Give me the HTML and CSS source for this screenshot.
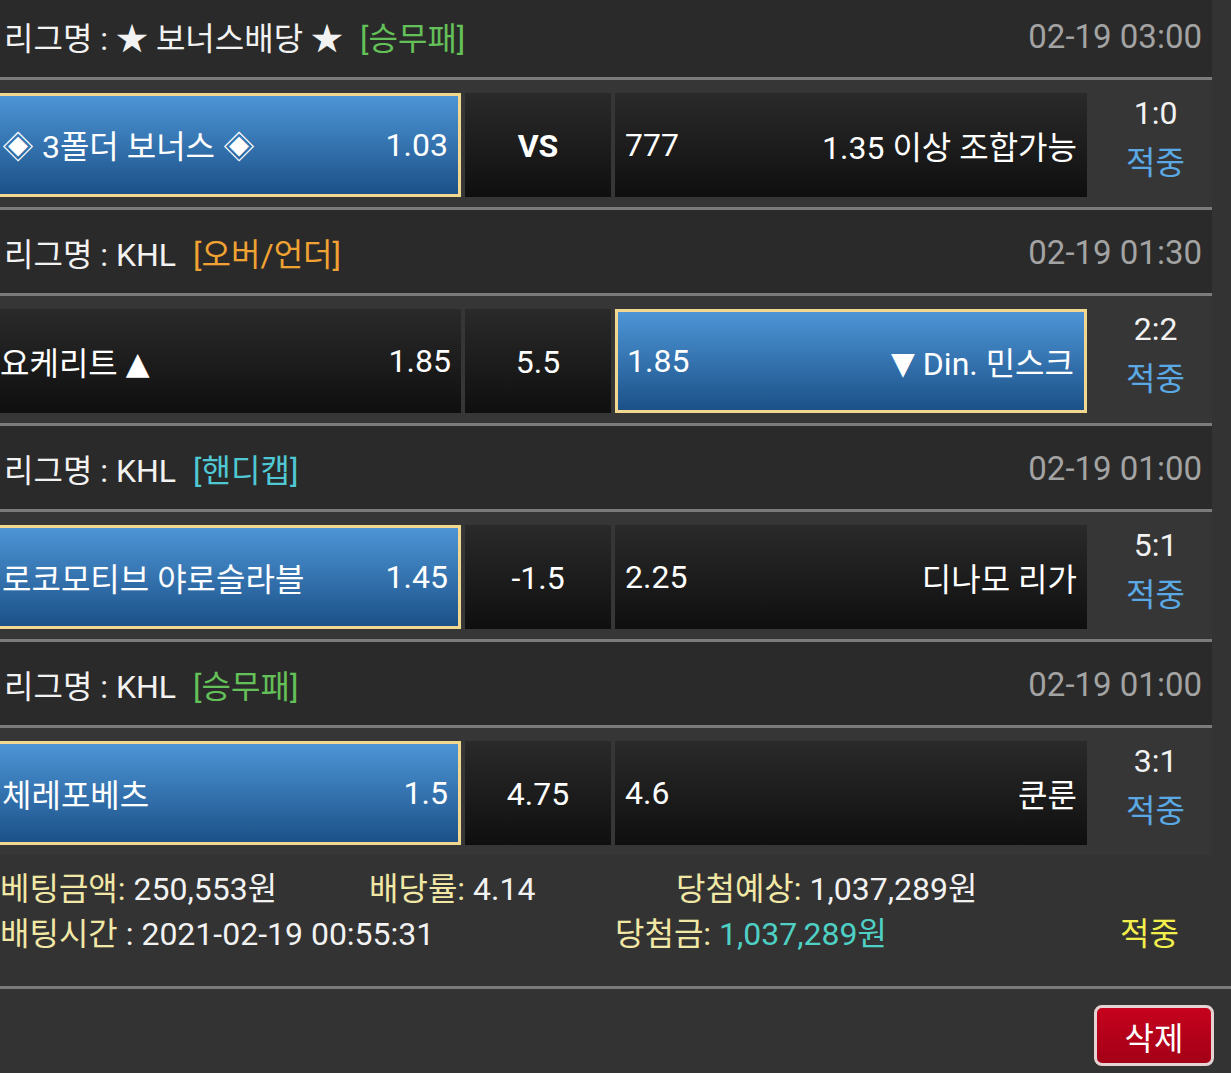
FILE: index.html
```html
<!DOCTYPE html>
<html lang="ko">
<head>
  <meta charset="UTF-8">
  <meta name="viewport" content="width=device-width, initial-scale=1.0">
  <title>베팅내역</title>
  <link rel="stylesheet" href="styles.css">
</head>
<body>
  <div class="slip">
    <div class="games">

      <div class="game">
        <div class="league">
          <span class="league-name">리그명 : ★ 보너스배당 ★</span>
          <span class="tag tag-green">[승무패]</span>
          <span class="time">02-19 03:00</span>
        </div>
        <div class="match">
          <div class="pick picked"><span>◈ 3폴더 보너스 ◈</span><span>1.03</span></div>
          <div class="pick mid vs">VS</div>
          <div class="pick"><span>777</span><span>1.35 이상 조합가능</span></div>
          <div class="result"><span class="score">1:0</span><span class="hit">적중</span></div>
        </div>
      </div>

      <div class="game">
        <div class="league">
          <span class="league-name">리그명 : KHL</span>
          <span class="tag tag-orange">[오버/언더]</span>
          <span class="time">02-19 01:30</span>
        </div>
        <div class="match">
          <div class="pick"><span>요케리트 <i class="arrow">▲</i></span><span>1.85</span></div>
          <div class="pick mid">5.5</div>
          <div class="pick picked"><span>1.85</span><span><i class="arrow">▼</i> Din. 민스크</span></div>
          <div class="result"><span class="score">2:2</span><span class="hit">적중</span></div>
        </div>
      </div>

      <div class="game">
        <div class="league">
          <span class="league-name">리그명 : KHL</span>
          <span class="tag tag-cyan">[핸디캡]</span>
          <span class="time">02-19 01:00</span>
        </div>
        <div class="match">
          <div class="pick picked"><span>로코모티브 야로슬라블</span><span>1.45</span></div>
          <div class="pick mid">-1.5</div>
          <div class="pick"><span>2.25</span><span>디나모 리가</span></div>
          <div class="result"><span class="score">5:1</span><span class="hit">적중</span></div>
        </div>
      </div>

      <div class="game">
        <div class="league">
          <span class="league-name">리그명 : KHL</span>
          <span class="tag tag-green">[승무패]</span>
          <span class="time">02-19 01:00</span>
        </div>
        <div class="match">
          <div class="pick picked"><span>체레포베츠</span><span>1.5</span></div>
          <div class="pick mid">4.75</div>
          <div class="pick"><span>4.6</span><span>쿤룬</span></div>
          <div class="result"><span class="score">3:1</span><span class="hit">적중</span></div>
        </div>
      </div>

    </div>

    <div class="summary">
      <div class="sum-row">
        <span class="sum-a"><em>베팅금액:</em> 250,553원</span>
        <span class="sum-b"><em>배당률:</em> 4.14</span>
        <span><em>당첨예상:</em> 1,037,289원</span>
      </div>
      <div class="sum-row">
        <span class="sum-c"><em>배팅시간</em> : 2021-02-19 00:55:31</span>
        <span class="sum-d"><em>당첨금:</em> <b class="won">1,037,289원</b></span>
        <span class="status">적중</span>
      </div>
    </div>

    <div class="actions">
      <button class="btn-delete">삭제</button>
    </div>
  </div>
</body>
</html>
```

FILE: styles.css
```css
:root {
  --bg: #333333;
  --league-bg: #2a2a2a;
  --match-bg: #363636;
  --line: #7b7b7b;
  --text: #f2f2f2;
  --muted: #a3a3a3;
  --label: #f1e8a6;
  --hit-blue: #5aa8e4;
}

* {
  margin: 0;
  padding: 0;
  box-sizing: border-box;
}

body {
  font-family: Roboto, "Noto Sans CJK KR", sans-serif;
  font-size: 32px;
  background: var(--bg);
  color: var(--text);
  overflow: hidden;
}

.slip {
  margin: -6px 0 0 -10px;
}

.games {
  width: 1222px;
}

/* league header */
.league {
  display: flex;
  align-items: center;
  height: 86px;
  padding: 1px 10px 0 14px;
  background: var(--league-bg);
  border-bottom: 3px solid var(--line);
}

.tag {
  margin-left: 17px;
}

.tag-green { color: #64c058; }
.tag-orange { color: #f0a232; }
.tag-cyan { color: #4fc8d4; }

.time {
  margin-left: auto;
  color: var(--muted);
  font-size: 33px;
}

/* match row */
.match {
  display: grid;
  grid-template-columns: 471px 146px 472px 1fr;
  column-gap: 4px;
  height: 130px;
  padding: 13px 0 10px;
  background: var(--match-bg);
  border-bottom: 3px solid var(--line);
}

.game:last-child .match {
  border-bottom: none;
  height: 127px;
}

.pick {
  display: flex;
  align-items: center;
  justify-content: space-between;
  padding: 0 10px;
  background: linear-gradient(#2a2a2a, #0f0f0f);
  color: #fff;
  white-space: nowrap;
}

.pick.picked {
  background: linear-gradient(#4d95d6, #1c5188);
  border: 3px solid #f2d88f;
  padding: 0 10px 0 9px;
}

.pick.mid {
  justify-content: center;
  padding-top: 2px;
}

.pick.vs {
  font-weight: 700;
}

.arrow {
  font-style: normal;
  font-family: "DejaVu Sans", sans-serif;
  font-size: 31px;
  vertical-align: 1px;
}

.result {
  display: flex;
  flex-direction: column;
  align-items: center;
  gap: 10px;
  padding-left: 8px;
  line-height: 40px;
}

.hit {
  color: var(--hit-blue);
}

/* summary */
.summary {
  padding: 12px 10px 29px;
  border-bottom: 3px solid var(--line);
}

.sum-row {
  display: flex;
  line-height: 45px;
  white-space: nowrap;
}

.sum-row em {
  font-style: normal;
  color: var(--label);
}

.sum-a { width: 369px; }
.sum-b { width: 307px; }
.sum-c { width: 615px; }
.sum-d { width: 505px; }

.won {
  font-weight: 400;
  color: #4fd0c4;
}

.status {
  color: #f2ee4c;
}

.actions {
  display: flex;
  justify-content: flex-end;
  padding: 16px 17px 0 0;
}

.btn-delete {
  width: 120px;
  height: 61px;
  font-family: inherit;
  font-size: 32px;
  color: #fff;
  background: linear-gradient(#c6021e, #a30016);
  border: 3px solid #e5d3d3;
  border-radius: 8px;
  cursor: pointer;
}
```
